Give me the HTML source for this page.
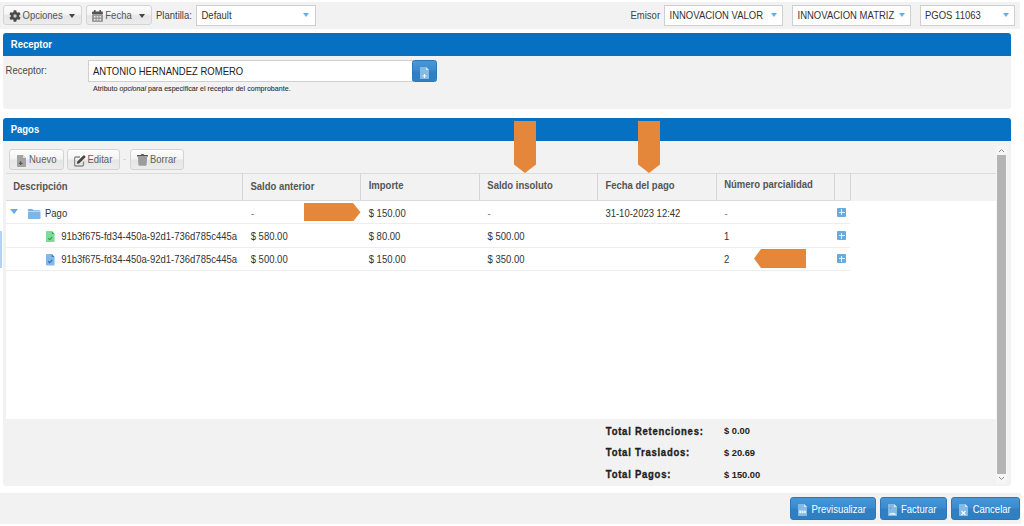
<!DOCTYPE html>
<html><head><meta charset="utf-8">
<style>
*{box-sizing:border-box;margin:0;padding:0}
html,body{width:1024px;height:526px;overflow:hidden;background:#fff;font-family:"Liberation Sans",sans-serif;color:#333}
.a{position:absolute}
.t{position:absolute;white-space:nowrap;font-size:9.5px;line-height:9.6px;transform:translateY(0.9px) scaleY(1.07);transform-origin:0 2px}
.b{font-weight:bold}
.btn{position:absolute;border:1px solid #d4d4d4;border-radius:3px;background:linear-gradient(#fdfdfd 0%,#f4f4f4 45%,#e6e6e6 55%,#ececec 100%)}
.sel{position:absolute;background:#fff;border:1px solid #cfcfcf}
.caret{position:absolute;width:0;height:0;border-left:3px solid transparent;border-right:3px solid transparent;border-top:4px solid #444}
.bcaret{position:absolute;width:0;height:0;border-left:3.5px solid transparent;border-right:3.5px solid transparent;border-top:4.5px solid #6aaee0}
.hdr{position:absolute;background:#0671c2;border-radius:3px 3px 0 0}
.panel{position:absolute;background:#f2f2f2;border-radius:0 0 3px 3px}
.col{position:absolute;top:173px;height:27px;width:1px;background:#d6d6d6}
.rl{position:absolute;height:1px;background:#ededed}
.pbtn{position:absolute;border:1px solid #2c77b8;border-radius:3px;background:linear-gradient(#4a97d6 0%,#3b8bcd 45%,#2f7fc2 55%,#2f80c3 100%)}
.plus{position:absolute;width:9px;height:9px;background:#67abe0;border-radius:1px}
.plus:before{content:"";position:absolute;left:4px;top:1.5px;width:1px;height:6px;background:#e4f0fa}
.plus:after{content:"";position:absolute;left:1.5px;top:4px;width:6px;height:1px;background:#e4f0fa}
.arr{position:absolute;background:#e5873b}
</style></head><body>
<div id="root" style="position:absolute;left:0;top:0;width:1024px;height:526px;filter:none">

<!-- top toolbar -->
<div class="a" style="left:0;top:2px;width:1020px;height:26.5px;background:#f2f2f2"></div>

<div class="btn" style="left:3px;top:5px;width:79px;height:20px"></div>
<svg class="a" style="left:9px;top:10px" width="12" height="12" viewBox="0 0 12 12"><path fill="#4a4a4a" d="M4.46 1.99 L4.70 0.35 L7.30 0.35 L7.54 1.99 L8.71 2.66 L10.24 2.04 L11.55 4.30 L10.25 5.33 L10.25 6.67 L11.55 7.70 L10.24 9.96 L8.71 9.34 L7.54 10.01 L7.30 11.65 L4.70 11.65 L4.46 10.01 L3.29 9.34 L1.76 9.96 L0.45 7.70 L1.75 6.67 L1.75 5.33 L0.45 4.30 L1.76 2.04 L3.29 2.66 Z"/><circle cx="6" cy="6" r="1.7" fill="#c9c9c9"/></svg>
<div class="t" style="left:22.5px;top:10.3px;color:#555">Opciones</div>
<div class="caret" style="left:68.7px;top:13.5px"></div>

<div class="btn" style="left:86px;top:5px;width:66px;height:20px"></div>
<svg class="a" style="left:92px;top:10px" width="11" height="12" viewBox="0 0 11 12"><rect x="0" y="1.5" width="11" height="3" rx="1" fill="#555"/><rect x="2" y="0" width="1.6" height="3" fill="#555"/><rect x="7.4" y="0" width="1.6" height="3" fill="#555"/><rect x="0" y="4.5" width="11" height="7.5" rx="1" fill="#999"/><g fill="#e8e8e8"><rect x="2" y="6" width="1.5" height="1.5"/><rect x="4.75" y="6" width="1.5" height="1.5"/><rect x="7.5" y="6" width="1.5" height="1.5"/><rect x="2" y="9" width="1.5" height="1.5"/><rect x="4.75" y="9" width="1.5" height="1.5"/><rect x="7.5" y="9" width="1.5" height="1.5"/></g></svg>
<div class="t" style="left:105.3px;top:10.3px;color:#555">Fecha</div>
<div class="caret" style="left:139.4px;top:13.5px"></div>

<div class="t" style="left:156px;top:10.3px;color:#444">Plantilla:</div>
<div class="sel" style="left:196px;top:5px;width:120px;height:21px"></div>
<div class="t" style="left:201.5px;top:10.3px;color:#333">Default</div>
<div class="bcaret" style="left:303px;top:13.3px"></div>

<div class="t" style="left:630.5px;top:10.3px;color:#444">Emisor</div>
<div class="sel" style="left:664px;top:5px;width:119px;height:21px"></div>
<div class="t" style="left:669.5px;top:10.3px;color:#333">INNOVACION VALOR</div>
<div class="bcaret" style="left:770.5px;top:13.3px"></div>
<div class="sel" style="left:792px;top:5px;width:119px;height:21px"></div>
<div class="t" style="left:797.5px;top:10.3px;color:#333">INNOVACION MATRIZ</div>
<div class="bcaret" style="left:899px;top:13.3px"></div>
<div class="sel" style="left:920px;top:5px;width:95px;height:21px"></div>
<div class="t" style="left:925px;top:10.3px;color:#333">PGOS 11063</div>
<div class="bcaret" style="left:1003px;top:13.3px"></div>

<!-- Receptor panel -->
<div class="hdr" style="left:3px;top:33px;width:1008px;height:23px"></div>
<div class="t b" style="left:10.8px;top:39.4px;color:#fff">Receptor</div>
<div class="panel" style="left:3px;top:56px;width:1008px;height:53px"></div>
<div class="t" style="left:5.6px;top:65.4px;color:#4a4a4a">Receptor:</div>
<div class="sel" style="left:88px;top:60px;width:325px;height:22px;border-color:#d0d0d0"></div>
<div class="t" style="left:93px;top:66.0px;color:#222">ANTONIO HERNANDEZ ROMERO</div>
<div class="pbtn" style="left:412px;top:60px;width:25px;height:22px;border-radius:2.5px"></div>
<svg class="a" style="left:420px;top:67px" width="9" height="12" viewBox="0 0 9 12"><path d="M0 0 H6 L9 3 V12 H0 Z" fill="#86bae6"/><path d="M6 0 L9 3 H6 Z" fill="#d8eaf8"/><path d="M4 7 H5 V8.5 H6.5 V9.5 H5 V11 H4 V9.5 H2.5 V8.5 H4 Z" fill="#f4f9fd"/></svg>
<div class="t" style="left:93px;top:85.3px;font-size:7.12px;line-height:7.2px;color:#2e2e2e;-webkit-text-stroke:0.08px #2e2e2e">Atributo <i>opcional</i> para especificar el receptor del comprobante.</div>

<!-- Pagos panel -->
<div class="hdr" style="left:3px;top:118px;width:1008px;height:23px"></div>
<div class="t b" style="left:10.7px;top:124.2px;color:#fff">Pagos</div>
<div class="panel" style="left:3px;top:141px;width:1008px;height:344.5px"></div>

<div class="btn" style="left:9px;top:149px;width:55px;height:21px"></div>
<svg class="a" style="left:16.5px;top:154.5px" width="9" height="12" viewBox="0 0 9 12"><path d="M0.5 0 H6 L9 3 V11.3 Q9 12 8.3 12 H0.7 Q0 12 0 11.3 V0.7 Q0 0 0.7 0 Z" fill="#a3a3a3"/><path d="M6 0 L9 3 H6 Z" fill="#dcdcdc"/><path d="M3.2 6.3 H4.2 V7.7 H5.6 V8.7 H4.2 V10.1 H3.2 V8.7 H1.8 V7.7 H3.2 Z" fill="#4d4d4d"/></svg>
<div class="t" style="left:29px;top:154.4px;color:#606060">Nuevo</div>
<div class="btn" style="left:67px;top:149px;width:53px;height:21px"></div>
<svg class="a" style="left:73.5px;top:154.5px" width="12" height="12" viewBox="0 0 12 12"><path d="M6 2 H2 Q0.5 2 0.5 3.5 V9.5 Q0.5 11 2 11 H8 Q9.5 11 9.5 9.5 V6.5" stroke="#8a8a8a" stroke-width="1.4" fill="none"/><path d="M2.8 8.8 L3.3 6.6 L9.3 0.6 Q9.9 0.1 10.5 0.6 L11.2 1.3 Q11.7 1.9 11.2 2.5 L5.2 8.5 Z" fill="#474747"/></svg>
<div class="t" style="left:87.5px;top:154.4px;color:#606060">Editar</div>
<div class="a" style="left:123px;top:159px;width:3px;height:1px;background:#d8d8d8"></div>
<div class="btn" style="left:130px;top:149px;width:54px;height:21px"></div>
<svg class="a" style="left:136.6px;top:154.4px" width="11" height="12" viewBox="0 0 11 12"><path d="M0 1.2 Q0 0.9 0.4 0.9 H3.5 Q4 0 5.5 0 Q7 0 7.5 0.9 H10.6 Q11 0.9 11 1.2 V2.4 H0 Z" fill="#555"/><path d="M0.8 2.6 H10.2 L9.6 10.8 Q9.5 11.7 8.6 11.7 H2.4 Q1.5 11.7 1.4 10.8 Z" fill="#9c9c9c"/></svg>
<div class="t" style="left:150px;top:154.4px;color:#606060">Borrar</div>

<!-- grid -->
<div class="a" style="left:6px;top:173px;width:990px;height:1px;background:#dcdcdc"></div>
<div class="a" style="left:6px;top:174px;width:990px;height:26px;background:#f2f2f2"></div>
<div class="a" style="left:6px;top:200px;width:844px;height:1px;background:#d9d9d9"></div>
<div class="a" style="left:6px;top:201px;width:990px;height:218px;background:#fff"></div>
<div class="col" style="left:242px"></div>
<div class="col" style="left:360px"></div>
<div class="col" style="left:479px"></div>
<div class="col" style="left:597px"></div>
<div class="col" style="left:716px"></div>
<div class="col" style="left:834px"></div>
<div class="col" style="left:850px"></div>

<div class="t b" style="left:13.2px;top:181.4px;color:#555">Descripción</div>
<div class="t b" style="left:250.5px;top:181.4px;color:#555">Saldo anterior</div>
<div class="t b" style="left:368.7px;top:179.9px;color:#555">Importe</div>
<div class="t b" style="left:487.3px;top:179.8px;color:#555">Saldo insoluto</div>
<div class="t b" style="left:605.4px;top:179.7px;color:#555">Fecha del pago</div>
<div class="t b" style="left:724.2px;top:179.4px;color:#555">Número parcialidad</div>

<div class="rl" style="left:6px;top:223px;width:844px"></div>
<div class="rl" style="left:6px;top:247px;width:844px"></div>
<div class="rl" style="left:6px;top:270px;width:844px"></div>

<!-- row 1 -->
<div class="a" style="left:9.6px;top:209px;width:0;height:0;border-left:4px solid transparent;border-right:4px solid transparent;border-top:5px solid #6aa8de"></div>
<svg class="a" style="left:28px;top:208.5px" width="12.5" height="10" viewBox="0 0 12.5 10"><path d="M0 0.8 Q0 0 0.8 0 H4.3 L5.5 1.2 H11.7 Q12.5 1.2 12.5 2 V2.6 H0 Z" fill="#78b0e2"/><path d="M0 3.1 H12.5 V9.3 Q12.5 10 11.8 10 H0.7 Q0 10 0 9.3 Z" fill="#7fb5e5"/></svg>
<div class="t" style="left:45px;top:208.4px;color:#333">Pago</div>
<div class="t" style="left:251px;top:208.4px;color:#777">-</div>
<div class="t" style="left:368.7px;top:208.4px;color:#333">$ 150.00</div>
<div class="t" style="left:487.5px;top:208.4px;color:#777">-</div>
<div class="t" style="left:605.4px;top:208.4px;color:#333">31-10-2023 12:42</div>
<div class="t" style="left:724.5px;top:208.4px;color:#777">-</div>
<div class="plus" style="left:837px;top:207.5px"></div>

<!-- row 2 -->
<svg class="a" style="left:46px;top:230.8px" width="8.6" height="11.5" viewBox="0 0 9 12"><path d="M0 1 Q0 0 1 0 H6 L9 3 V11 Q9 12 8 12 H1 Q0 12 0 11 Z" fill="#7ddc98"/><path d="M6 0 L9 3 H6 Z" fill="#38b060"/><path d="M2.4 7.6 L3.9 9.1 L6.6 6.2" stroke="#2ba552" stroke-width="1.2" fill="none"/></svg>
<div class="t" style="left:61.2px;top:231.2px;color:#333">91b3f675-fd34-450a-92d1-736d785c445a</div>
<div class="t" style="left:250.7px;top:231.2px;color:#333">$ 580.00</div>
<div class="t" style="left:368.7px;top:231.2px;color:#333">$ 80.00</div>
<div class="t" style="left:487.5px;top:231.2px;color:#333">$ 500.00</div>
<div class="t" style="left:724px;top:231.2px;color:#333">1</div>
<div class="plus" style="left:837px;top:231px"></div>

<!-- row 3 -->
<svg class="a" style="left:46px;top:254px" width="8.6" height="11.5" viewBox="0 0 9 12"><path d="M0 1 Q0 0 1 0 H6 L9 3 V11 Q9 12 8 12 H1 Q0 12 0 11 Z" fill="#82b8e6"/><path d="M6 0 L9 3 H6 Z" fill="#2f7fd0"/><path d="M2.4 7.6 L3.9 9.1 L6.6 6.2" stroke="#2a6fc2" stroke-width="1.2" fill="none"/></svg>
<div class="t" style="left:61.2px;top:254.4px;color:#333">91b3f675-fd34-450a-92d1-736d785c445a</div>
<div class="t" style="left:250.7px;top:254.4px;color:#333">$ 500.00</div>
<div class="t" style="left:368.7px;top:254.4px;color:#333">$ 150.00</div>
<div class="t" style="left:487.5px;top:254.4px;color:#333">$ 350.00</div>
<div class="t" style="left:724px;top:254.4px;color:#333">2</div>
<div class="plus" style="left:837px;top:254px"></div>

<div class="a" style="left:0;top:231px;width:2px;height:37px;background:#b2d3ef"></div>

<!-- scrollbar -->
<div class="a" style="left:996px;top:146px;width:11px;height:338px;background:#f6f6f6"></div>
<div class="a" style="left:997px;top:155px;width:9px;height:319px;background:#b4b4b4"></div>
<svg class="a" style="left:998px;top:148px" width="7" height="5" viewBox="0 0 7 5"><path d="M1 4 L3.5 1.5 L6 4" stroke="#888" stroke-width="1" fill="none"/></svg>
<svg class="a" style="left:998px;top:476px" width="7" height="5" viewBox="0 0 7 5"><path d="M1 1 L3.5 3.5 L6 1" stroke="#888" stroke-width="1" fill="none"/></svg>

<!-- totals -->
<div class="t b" style="left:605.8px;top:425.6px;letter-spacing:0.75px;color:#1e1e1e;-webkit-text-stroke:0.3px #1e1e1e">Total Retenciones:</div>
<div class="t b" style="left:605.8px;top:447.2px;letter-spacing:0.75px;color:#1e1e1e;-webkit-text-stroke:0.3px #1e1e1e">Total Traslados:</div>
<div class="t b" style="left:605.8px;top:469.0px;letter-spacing:0.75px;color:#1e1e1e;-webkit-text-stroke:0.3px #1e1e1e">Total Pagos:</div>
<div class="t b" style="left:724px;top:425.9px;font-size:9.3px;color:#222">$ 0.00</div>
<div class="t b" style="left:724px;top:447.6px;font-size:9.3px;color:#222">$ 20.69</div>
<div class="t b" style="left:724px;top:469.8px;font-size:9.3px;color:#222">$ 150.00</div>

<!-- arrows -->
<svg class="a" style="left:304px;top:202.5px" width="57" height="18.5" viewBox="0 0 57 19" preserveAspectRatio="none"><path d="M0 0 H49 L56.5 9.5 L49 19 H0 Z" fill="#e5873b"/></svg>
<svg class="a" style="left:754px;top:249px" width="52" height="19" viewBox="0 0 52 19"><path d="M52 0 H7 L0 9.5 L7 19 H52 Z" fill="#e5873b"/></svg>
<svg class="a" style="left:514px;top:121px" width="22" height="52" viewBox="0 0 22 52"><path d="M0 0 H22 V43.5 L11 52 L0 43.5 Z" fill="#e5873b"/></svg>
<svg class="a" style="left:638px;top:121px" width="22" height="52" viewBox="0 0 22 52"><path d="M0 0 H22 V43.5 L11 52 L0 43.5 Z" fill="#e5873b"/></svg>

<!-- footer -->
<div class="a" style="left:0;top:492.5px;width:1021px;height:31.5px;background:#f2f2f2"></div>
<div class="pbtn" style="left:790px;top:497px;width:86px;height:23px"></div>
<svg class="a" style="left:797.5px;top:504px" width="9" height="12" viewBox="0 0 9 12"><path d="M0 0 H6 L9 3 V12 H0 Z" fill="#86bae6"/><path d="M6 0 L9 3 H6 Z" fill="#d8eaf8"/><g fill="#e8f2fb"><rect x="1.2" y="6.6" width="1.9" height="2.6"/><rect x="3.5" y="6.6" width="2" height="2.6"/><rect x="5.9" y="6.6" width="1.9" height="2.6"/></g></svg>
<div class="t" style="left:811.5px;top:503.8px;color:#fff">Previsualizar</div>
<div class="pbtn" style="left:880px;top:497px;width:67px;height:23px"></div>
<svg class="a" style="left:887.5px;top:504px" width="9" height="12" viewBox="0 0 9 12"><path d="M0 0 H6 L9 3 V12 H0 Z" fill="#86bae6"/><path d="M6 0 L9 3 H6 Z" fill="#d8eaf8"/><path d="M1 10.5 Q2.5 8 4 9.2 Q5.5 8.2 8 10.2 V10.8 H1 Z" fill="#e8f2fb"/><circle cx="2.8" cy="4.2" r="0.9" fill="#5f9fd8"/></svg>
<div class="t" style="left:901px;top:503.8px;color:#fff">Facturar</div>
<div class="pbtn" style="left:951px;top:497px;width:69px;height:23px"></div>
<svg class="a" style="left:958.5px;top:504px" width="9" height="12" viewBox="0 0 9 12"><path d="M0 0 H6 L9 3 V12 H0 Z" fill="#86bae6"/><path d="M6 0 L9 3 H6 Z" fill="#d8eaf8"/><path d="M2.5 7 L6.5 11 M6.5 7 L2.5 11" stroke="#fff" stroke-width="1.1"/></svg>
<div class="t" style="left:972.7px;top:503.8px;color:#fff">Cancelar</div>

</div>
</body></html>
